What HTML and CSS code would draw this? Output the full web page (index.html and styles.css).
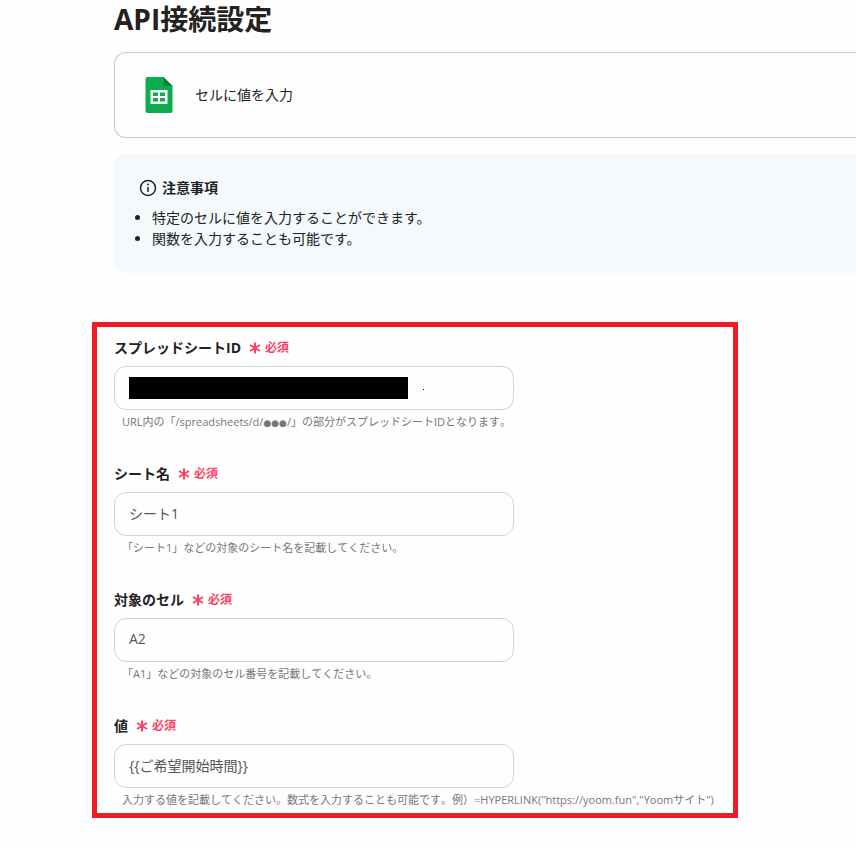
FILE: index.html
```html
<!DOCTYPE html>
<html lang="ja">
<head>
  <meta charset="UTF-8">
  <title>API接続設定</title>
  <meta name="viewport" content="width=device-width, initial-scale=1">
  <link rel="stylesheet" href="styles.css">
</head>
<body>

  <main class="page">
    <h1 class="page-title">API接続設定</h1>

    <div class="app-card">
      <svg class="app-icon" width="28" height="38" viewBox="0 0 28 38" aria-hidden="true">
        <path d="M2.500 1H18.500L27.500 10V35A2 2 0 0 1 25.500 37H2.500A2 2 0 0 1 .5 35V3A2 2 0 0 1 2.500 1Z" fill="#0bad4e"/>
        <path d="M18.500 1L27.500 10H20.500A2 2 0 0 1 18.500 8Z" fill="#078438"/>
        <path fill-rule="evenodd" d="M5.500 14H22.500V28H5.500ZM8 16.500V20H13V16.500ZM15 16.500V20H20V16.500ZM8 22V25.500H13V22ZM15 22V25.500H20V22Z" fill="#fff"/>
      </svg>
      <span>セルに値を入力</span>
    </div>

    <section class="notice">
      <h2 class="notice-title">
        <svg width="18" height="18" viewBox="0 0 18 18" aria-hidden="true">
          <circle cx="9" cy="9" r="7.500" fill="none" stroke="#222" stroke-width="1.500"/>
          <path d="M9 8V13" stroke="#222" stroke-width="1.500"/>
          <circle cx="9" cy="5.500" r="1" fill="#222"/>
        </svg>
        注意事項
      </h2>
      <ul class="notice-list">
        <li>特定のセルに値を入力することができます。</li>
        <li>関数を入力することも可能です。</li>
      </ul>
    </section>

    <form class="fields">
      <div class="field">
        <div class="field-head">
          <label for="spreadsheet-id">スプレッドシートID</label>
          <span class="required">
            <svg width="12" height="12" viewBox="0 0 12 12" aria-hidden="true"><path d="M6 .5V11.500M1 3L11 9M11 3L1 9"/></svg>
            必須
          </span>
        </div>
        <div class="masked">
          <input type="text" id="spreadsheet-id">
          <span class="mask"></span>
          <span class="mask-dot"></span>
        </div>
        <p class="help">URL内の「/spreadsheets/d/<span class="dots">●●●</span>/」の部分がスプレッドシートIDとなります。</p>
      </div>

      <div class="field">
        <div class="field-head">
          <label for="sheet-name">シート名</label>
          <span class="required">
            <svg width="12" height="12" viewBox="0 0 12 12" aria-hidden="true"><path d="M6 .5V11.500M1 3L11 9M11 3L1 9"/></svg>
            必須
          </span>
        </div>
        <input type="text" id="sheet-name" value="シート1">
        <p class="help">「シート1」などの対象のシート名を記載してください。</p>
      </div>

      <div class="field">
        <div class="field-head">
          <label for="target-cell">対象のセル</label>
          <span class="required">
            <svg width="12" height="12" viewBox="0 0 12 12" aria-hidden="true"><path d="M6 .5V11.500M1 3L11 9M11 3L1 9"/></svg>
            必須
          </span>
        </div>
        <input type="text" id="target-cell" value="A2">
        <p class="help">「A1」などの対象のセル番号を記載してください。</p>
      </div>

      <div class="field">
        <div class="field-head">
          <label for="cell-value">値</label>
          <span class="required">
            <svg width="12" height="12" viewBox="0 0 12 12" aria-hidden="true"><path d="M6 .5V11.500M1 3L11 9M11 3L1 9"/></svg>
            必須
          </span>
        </div>
        <input type="text" id="cell-value" value="{{ご希望開始時間}}">
        <p class="help">入力する値を記載してください。数式を入力することも可能です。例）=HYPERLINK("https://yoom.fun","Yoomサイト")</p>
      </div>
    </form>
  </main>

</body>
</html>
```

FILE: styles.css
```css
/* General Styles */
* {
  box-sizing: border-box;
}

body {
  font-family: "Open Sans", "Noto Sans CJK JP", sans-serif;
  font-size: 14px;
  line-height: 20px;
  margin: 0;
  color: #222;
  background-color: #fefefe;
}

.page {
  padding-left: 114px;
}

.page-title {
  margin: 0 0 14px;
  font-size: 28px;
  line-height: 38px;
  font-weight: 700;
}

/* Both cards run off the right side of the window */
.app-card {
  display: flex;
  align-items: center;
  gap: 22px;
  height: 86px;
  padding-left: 30px;
  border: 1px solid #c8c7cc;
  border-right: none;
  border-radius: 12px 0 0 12px;
}

.notice {
  margin-top: 16px;
  padding: 24px;
  background-color: #f4f9fc;
  border-radius: 12px 0 0 12px;
}

.notice-title {
  display: flex;
  align-items: center;
  gap: 5px;
  margin: 0 0 9px;
  font-size: 14px;
  font-weight: 700;
}

.notice-title svg {
  margin-left: 1px;
}

.notice-list {
  margin: 0;
  padding-left: 14px;
  line-height: 21px;
}

/* Fields */
.fields {
  display: flex;
  flex-direction: column;
  gap: 34px;
  max-width: 646px;
  margin: 49px 0 30px -22px;
  padding: 11px 15px 5px 17px;
  border: 5px solid #ee1c25;
}

.field-head {
  display: flex;
  align-items: center;
  gap: 8px;
  margin-bottom: 8px;
}

label {
  font-weight: 700;
}

.required {
  display: flex;
  align-items: center;
  gap: 4px;
  font-size: 12px;
  font-weight: 700;
  color: #fb4264;
}

.required svg {
  fill: none;
  stroke: currentColor;
  stroke-width: 2;
}

input[type="text"] {
  display: block;
  width: 100%;
  max-width: 400px;
  height: 44px;
  padding: 0 14px 3px;
  font: inherit;
  color: #555;
  background-color: #fefefe;
  border: 1px solid #cfd2de;
  border-radius: 12px;
}

input[type="text"]:focus {
  border-color: #8b90a8;
  outline: none;
}

.help {
  margin: 4px 0 0;
  padding-left: 8px;
  font-size: 11px;
  line-height: 16px;
  font-kerning: none;
  color: #777;
}

.dots {
  font-family: "DejaVu Sans", sans-serif;
  font-size: 9px;
  line-height: 1;
}

/* Hidden ID */
.masked {
  position: relative;
}

.mask {
  position: absolute;
  top: 11px;
  left: 15px;
  width: 279px;
  height: 22px;
  background-color: #000;
}

.mask-dot {
  position: absolute;
  top: 23px;
  left: 309px;
  width: 1px;
  height: 1px;
  background-color: #000;
}
```
